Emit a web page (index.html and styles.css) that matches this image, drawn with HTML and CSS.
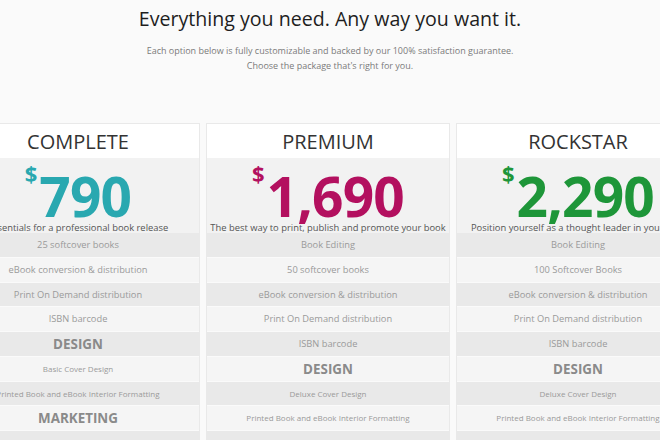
FILE: index.html
```html
<!DOCTYPE html>
<html lang="en">
<head>
<meta charset="utf-8">
<title>Pricing</title>
<link rel="stylesheet" href="styles.css">
</head>
<body>
<section class="hero">
  <h1 class="hero-title">Everything you need. Any way you want it.</h1>
  <p class="hero-sub">Each option below is fully customizable and backed by our 100% satisfaction guarantee.<br>Choose the package that's right for you.</p>
</section>
<section class="plans">
  <div class="plan">
    <div class="plan-name">COMPLETE</div>
    <div class="plan-price-box">
      <div class="price teal"><span class="cur">$</span><span class="amt">790</span></div>
      <div class="plan-desc"><span>Essentials for a professional book release</span></div>
    </div>
    <ul class="features">
      <li>25 softcover books</li>
      <li>eBook conversion &amp; distribution</li>
      <li>Print On Demand distribution</li>
      <li>ISBN barcode</li>
      <li class="section">DESIGN</li>
      <li class="small">Basic Cover Design</li>
      <li class="small">Printed Book and eBook Interior Formatting</li>
      <li class="section">MARKETING</li>
      <li class="small">Author Website</li>
    </ul>
  </div>
  <div class="plan">
    <div class="plan-name">PREMIUM</div>
    <div class="plan-price-box">
      <div class="price magenta"><span class="cur">$</span><span class="amt">1,690</span></div>
      <div class="plan-desc"><span>The best way to print, publish and promote your book</span></div>
    </div>
    <ul class="features">
      <li>Book Editing</li>
      <li>50 softcover books</li>
      <li>eBook conversion &amp; distribution</li>
      <li>Print On Demand distribution</li>
      <li>ISBN barcode</li>
      <li class="section">DESIGN</li>
      <li class="small">Deluxe Cover Design</li>
      <li class="small">Printed Book and eBook Interior Formatting</li>
      <li class="small">Custom Illustrations</li>
    </ul>
  </div>
  <div class="plan">
    <div class="plan-name">ROCKSTAR</div>
    <div class="plan-price-box">
      <div class="price green"><span class="cur">$</span><span class="amt">2,290</span></div>
      <div class="plan-desc"><span>Position yourself as a thought leader in your field</span></div>
    </div>
    <ul class="features">
      <li>Book Editing</li>
      <li>100 Softcover Books</li>
      <li>eBook conversion &amp; distribution</li>
      <li>Print On Demand distribution</li>
      <li>ISBN barcode</li>
      <li class="section">DESIGN</li>
      <li class="small">Deluxe Cover Design</li>
      <li class="small">Printed Book and eBook Interior Formatting</li>
      <li class="small">Custom Illustrations</li>
    </ul>
  </div>
</section>
</body>
</html>
```
FILE: styles.css
```css
* { box-sizing: border-box; }
html, body { margin: 0; padding: 0; }
body {
  background: #fafafa;
  font-family: "Open Sans", "Liberation Sans", sans-serif;
  width: 660px;
  height: 440px;
  overflow: hidden;
}
.hero {
  text-align: center;
  padding-top: 5px;
}
.hero-title {
  margin: 0;
  font-size: 19.6px;
  line-height: 28px;
  font-weight: 400;
  color: #1e1e1e;
}
.hero-sub {
  margin: 10px 0 0;
  font-size: 9px;
  line-height: 15px;
  color: #7a7a7a;
}
.plans {
  display: flex;
  gap: 6px;
  margin: 50px 0 0 -44px;
  width: 744px;
}
.plan {
  flex: 0 0 244px;
  min-width: 0;
  border: 1px solid #e9e9e9;
  border-bottom: 0;
  background: #fff;
  text-align: center;
}
.plan-name {
  height: 34px;
  line-height: 35px;
  font-size: 20px;
  color: #333;
  background: #fff;
}
.plan-price-box {
  background: #f2f2f2;
  padding-top: 10px;
}
.price {
  display: flex;
  justify-content: center;
  align-items: flex-start;
  font-weight: 700;
}
.price .cur {
  font-size: 22px;
  line-height: 22px;
  margin-top: -6px;
  margin-right: 2px;
}
.price .amt {
  font-size: 55px;
  line-height: 55px;
  letter-spacing: -0.8px;
}
.teal { color: #29a8b0; }
.magenta { color: #b3105f; }
.green { color: #1e9639; }
.plan-desc {
  display: flex;
  justify-content: center;
  font-size: 9.4px;
  line-height: 10px;
  height: 10px;
  color: #555;
  white-space: nowrap;
}
.plan-desc span { flex: none; }
.features {
  list-style: none;
  margin: 0;
  padding: 0;
}
.features li {
  height: 24.75px;
  line-height: 24.5px;
  font-size: 9.3px;
  color: #9a9a9a;
  background: #f5f5f5;
  border-bottom: 1px solid #fafafa;
  white-space: nowrap;
}
.features li:nth-child(odd) { background: #e9e9e9; }
.features li.section {
  font-size: 13.4px;
  font-weight: 700;
  color: #8a8a8a;
}
.features li.small {
  font-size: 8px;
}
```
